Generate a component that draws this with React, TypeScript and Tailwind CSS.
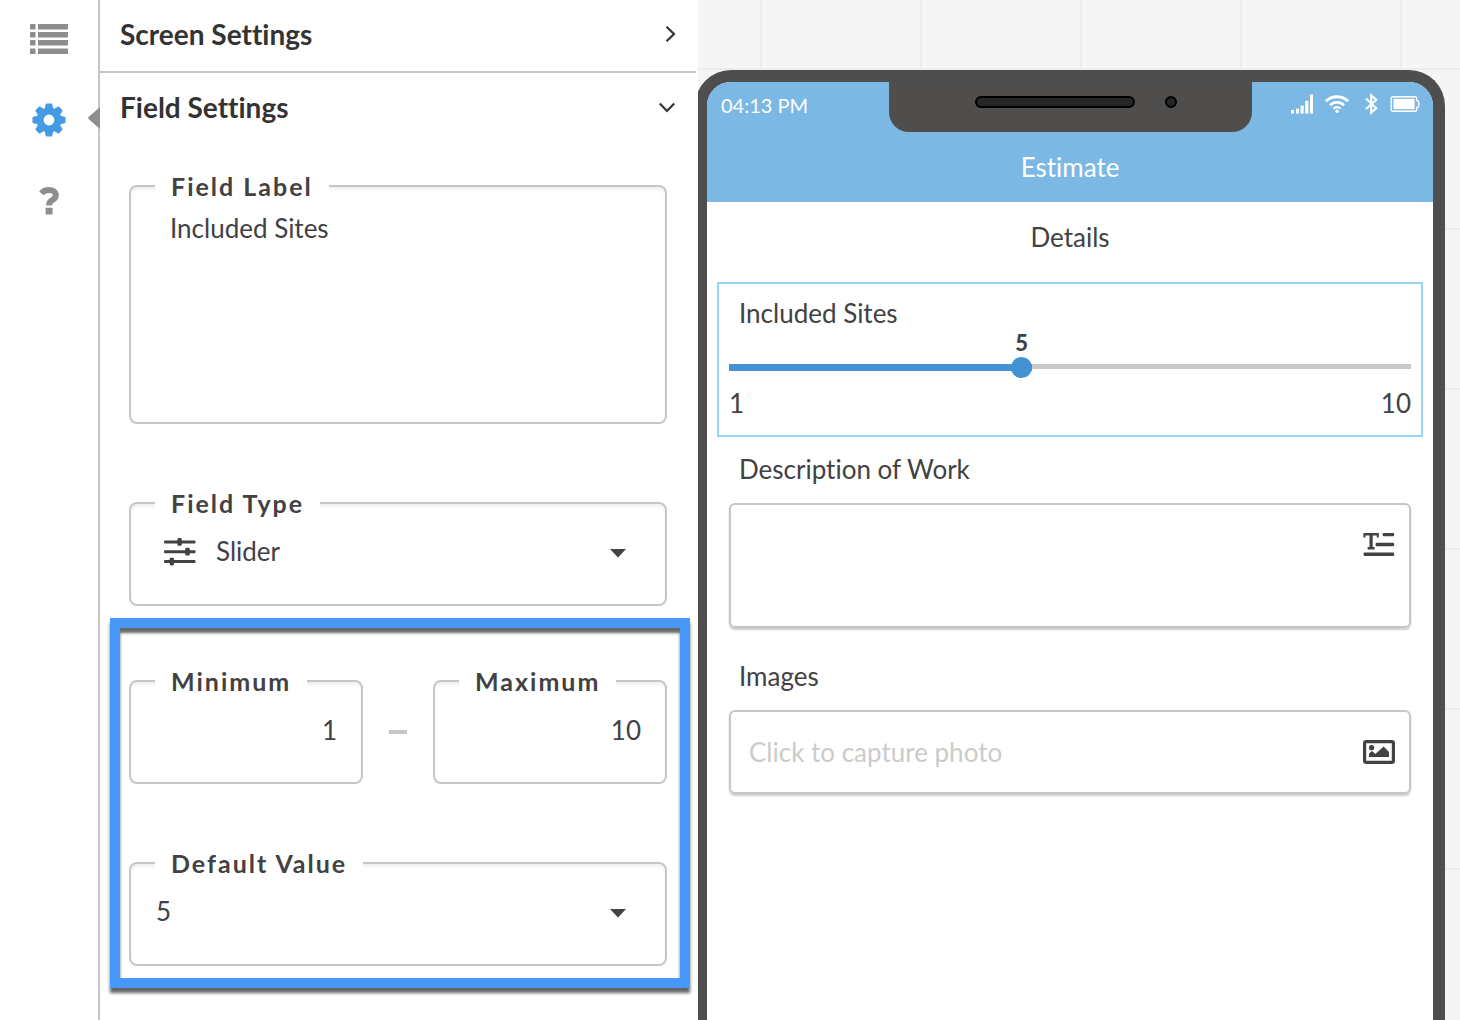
import { ReactNode, useState } from 'react'

interface OutlinedFieldProps {
  id: string
  label: string
  className?: string
  children: ReactNode
}

const FIELD_TYPES = ['Slider', 'Text', 'Number', 'Dropdown']
const SCALE = [1, 2, 3, 4, 5, 6, 7, 8, 9, 10]

function OutlinedField({ id, label, className = '', children }: OutlinedFieldProps) {
  return (
    <fieldset className={`min-w-0 rounded-lg border-2 border-[#c6c6c6] shadow-[inset_0_3px_3px_rgba(0,0,0,0.06)] ${className}`}>
      <legend className="ml-6 h-8 bg-white px-4 text-[25px] leading-8 font-bold tracking-[2px]">
        <label htmlFor={id}>{label}</label>
      </legend>
      {children}
    </fieldset>
  )
}

function CaretIcon() {
  return (
    <svg className="pointer-events-none absolute top-[30px] right-[39px] h-[9px] w-4" viewBox="0 0 16 9" fill="#424143" aria-hidden="true">
      <path d="M0 0h16L8 8.5z" />
    </svg>
  )
}

function ListIcon() {
  return (
    <svg width="38" height="30" viewBox="0 0 38 30" fill="#8f8d90" aria-hidden="true">
      {[0, 8, 16, 24.5].map((y) => (
        <g key={y}>
          <rect x="0" y={y} width="5.5" height="5.5" rx="0.6" />
          <rect x="8" y={y} width="30" height="5.5" rx="0.6" />
        </g>
      ))}
    </svg>
  )
}

function GearIcon() {
  return (
    <svg width="34" height="34" viewBox="-17 -17 34 34" aria-hidden="true">
      <g fill="#459be3">
        {[0, 45, 90, 135, 180, 225, 270, 315].map((a) => (
          <path key={a} transform={`rotate(${a})`} d="M-4.6 -10L-3.3 -15.6Q-3.1 -16.5 -2.2 -16.5H2.2Q3.1 -16.5 3.3 -15.6L4.6 -10z" />
        ))}
      </g>
      <circle r="8.9" fill="none" stroke="#459be3" strokeWidth="7" />
    </svg>
  )
}

function HelpIcon() {
  return (
    <svg width="20" height="28" viewBox="0 0 20 28" aria-hidden="true">
      <path d="M2.4 6.4C4.4 4 6.6 3 9.6 3C14 3 16.8 5 16.8 8.2C16.8 11.2 14.8 12.4 12.6 13.6C10.7 14.6 10.1 15.6 10.1 18.6" fill="none" stroke="#8f8d90" strokeWidth="6" />
      <rect x="6.6" y="20.8" width="7" height="6.6" rx="0.6" fill="#8f8d90" />
    </svg>
  )
}

function SlidersIcon() {
  return (
    <svg className="pointer-events-none absolute top-[19px] left-[33px]" width="32" height="28" viewBox="0 0 32 28" fill="#424143" aria-hidden="true">
      <rect x="0" y="2.4" width="31.5" height="3" rx="1" />
      <rect x="0" y="12.2" width="31.5" height="3" rx="1" />
      <rect x="0" y="22.1" width="31.5" height="3" rx="1" />
      <rect x="13.4" y="0" width="4.4" height="7.8" rx="1.4" />
      <rect x="21.2" y="9.8" width="4.6" height="7.8" rx="1.4" />
      <rect x="5.6" y="19.7" width="4.4" height="7.8" rx="1.4" />
    </svg>
  )
}

function RichTextIcon() {
  return (
    <svg width="32" height="24" viewBox="0 0 32 24" fill="#424143" aria-hidden="true">
      <path d="M0.4 0H15.8V4.4H13.8V2.6H9.7V14H11.6V16.6H4.6V14H6.5V2.6H2.4V4.4H0.4z" />
      <rect x="19.6" y="0" width="11.6" height="3.2" rx="1.2" />
      <rect x="12.6" y="9.8" width="18.6" height="3.4" rx="1.2" />
      <rect x="0.6" y="19.6" width="30.6" height="3.4" rx="1.2" />
    </svg>
  )
}

function ImageIcon() {
  return (
    <svg width="32" height="24" viewBox="0 0 32 24" fill="#424143" aria-hidden="true">
      <rect x="1.6" y="1.6" width="28.8" height="20.8" rx="1.6" fill="none" stroke="#424143" strokeWidth="3.2" />
      <circle cx="8.6" cy="7.7" r="2.6" />
      <path d="M6 17V13.4L9 11L12.4 14L20.6 6.6L26 12V17z" />
    </svg>
  )
}

function StatusIcons() {
  return (
    <div className="flex items-center gap-3">
      <svg width="22" height="20" viewBox="0 0 22 20" fill="#fff" aria-hidden="true">
        <rect x="0" y="16" width="3" height="3.6" />
        <rect x="5" y="14.6" width="3" height="5" />
        <rect x="9.5" y="11.6" width="3.2" height="8" />
        <rect x="14.2" y="6.8" width="3.2" height="12.8" />
        <rect x="19" y="0.4" width="3" height="19.2" />
      </svg>
      <svg width="24" height="18" viewBox="0 0 24 18" fill="none" stroke="#fff" strokeWidth="2.9" aria-hidden="true">
        <path d="M0.9 6.2C7 0.2 17 0.2 23.1 6.2" />
        <path d="M5 10.2C9 6.4 15 6.4 19 10.2" strokeWidth="2.7" />
        <path d="M8.4 13.7C10.6 11.8 13.4 11.8 15.6 13.7" strokeWidth="2.3" />
        <circle cx="12" cy="16.2" r="1.7" fill="#fff" stroke="none" />
      </svg>
      <svg className="ml-1" width="13" height="22" viewBox="0 0 13 22" fill="none" stroke="#fff" strokeWidth="2.1" aria-hidden="true">
        <path d="M1 5.6L11.2 15.2L6.2 19.6V2.4L11.2 6.8L1 16" />
      </svg>
      <svg width="30" height="16" viewBox="0 0 30 16" fill="none" stroke="#fff" strokeWidth="1.4" aria-hidden="true">
        <path d="M3 0.7H24.8Q26.8 0.7 26.8 2.5V4.6Q28.8 4.8 28.8 6.4V9.6Q28.8 11.2 26.8 11.4V13.5Q26.8 15.3 24.8 15.3H3Q1.2 15.3 1.2 13.5V2.5Q1.2 0.7 3 0.7z" />
        <rect x="3.4" y="2.8" width="21.2" height="10.4" rx="0.8" fill="#fff" stroke="none" />
      </svg>
    </div>
  )
}

export default function App() {
  const [fieldLabel, setFieldLabel] = useState('Included Sites')
  const [fieldType, setFieldType] = useState('Slider')
  const [minimum, setMinimum] = useState('1')
  const [maximum, setMaximum] = useState('10')
  const [value, setValue] = useState(5)

  const percent = ((value - Number(minimum)) / (Number(maximum) - Number(minimum))) * 100

  return (
    <div className="flex h-screen overflow-hidden bg-white font-['Lato',sans-serif] text-[26px] leading-8 text-[#424143] [font-variant-ligatures:none]">
      {/* Icon rail */}
      <nav className="relative flex w-[100px] shrink-0 flex-col items-center border-r-2 border-[#c6c6c6] pt-6">
        <button aria-label="Fields" className="h-[30px]">
          <ListIcon />
        </button>
        <button aria-label="Settings" className="mt-[49px] h-[34px]">
          <GearIcon />
        </button>
        <button aria-label="Help" className="mt-[50px] h-7">
          <HelpIcon />
        </button>
        <svg className="absolute top-[107px] -right-0.5" width="12" height="22" viewBox="0 0 12 22" fill="#8f8d90" aria-hidden="true">
          <path d="M12 0V22L0.5 12Q0 11 0.5 10z" />
        </svg>
      </nav>

      {/* Settings panel */}
      <section className="w-[598px] shrink-0">
        <button className="mr-0.5 flex h-[73px] w-[596px] items-center justify-between border-b-2 border-[#c6c6c6] pr-5 pb-1 pl-5 text-[28px] font-bold text-[#333]">
          Screen Settings
          <svg width="11" height="16" viewBox="0 0 11 16" fill="none" stroke="#333" strokeWidth="2.2" aria-hidden="true">
            <path d="M1.5 0.8L9 8L1.5 15.2" />
          </svg>
        </button>
        <button className="flex h-[68px] w-full items-center justify-between pr-[23px] pl-5 text-[28px] font-bold text-[#333]">
          Field Settings
          <svg width="16" height="11" viewBox="0 0 16 11" fill="none" stroke="#333" strokeWidth="2.2" aria-hidden="true">
            <path d="M0.8 1.5L8 9L15.2 1.5" />
          </svg>
        </button>

        <div className="mt-[29px] flex flex-col gap-[63px] pr-[31px] pl-[29px]">
          <OutlinedField id="field-label" label="Field Label">
            <textarea
              id="field-label"
              value={fieldLabel}
              onChange={(e) => setFieldLabel(e.target.value)}
              className="block h-[220px] w-full resize-none bg-transparent px-[39px] pt-[10px] outline-none"
            />
          </OutlinedField>
          <OutlinedField id="field-type" label="Field Type">
            <div className="relative pb-[21px]">
              <SlidersIcon />
              <select
                id="field-type"
                value={fieldType}
                onChange={(e) => setFieldType(e.target.value)}
                className="block h-16 w-full appearance-none bg-transparent pl-[85px] outline-none"
              >
                {FIELD_TYPES.map((type) => (
                  <option key={type}>{type}</option>
                ))}
              </select>
              <CaretIcon />
            </div>
          </OutlinedField>
        </div>

        {/* Highlighted range options */}
        <div className="mt-3 mr-2 ml-2.5 flex flex-col gap-[63px] border-10 border-[#4699f8] pt-[37px] pr-[13px] pb-3 pl-[9px] shadow-[0_5px_3px_rgba(0,0,0,0.6),inset_0_5px_3px_rgba(0,0,0,0.6)]">
          <div className="flex items-center gap-[26px]">
            <OutlinedField id="minimum" label="Minimum" className="flex-1">
              <input
                id="minimum"
                value={minimum}
                onChange={(e) => setMinimum(e.target.value)}
                className="mb-[19px] block h-[66px] w-full bg-transparent pr-6 text-right outline-none"
              />
            </OutlinedField>
            <span className="mt-[14px] h-1 w-[18px] bg-[#c6c6c6]" />
            <OutlinedField id="maximum" label="Maximum" className="flex-1">
              <input
                id="maximum"
                value={maximum}
                onChange={(e) => setMaximum(e.target.value)}
                className="mb-[19px] block h-[66px] w-full bg-transparent pr-6 text-right outline-none"
              />
            </OutlinedField>
          </div>
          <OutlinedField id="default-value" label="Default Value">
            <div className="relative pb-[21px]">
              <select
                id="default-value"
                value={value}
                onChange={(e) => setValue(Number(e.target.value))}
                className="block h-16 w-full appearance-none bg-transparent pl-[25px] outline-none"
              >
                {SCALE.map((n) => (
                  <option key={n}>{n}</option>
                ))}
              </select>
              <CaretIcon />
            </div>
          </OutlinedField>
        </div>
      </section>

      {/* Phone preview */}
      <main className="flex min-w-0 flex-1 overflow-hidden bg-[#f5f5f5] bg-[linear-gradient(to_right,#ededed_2px,transparent_2px),linear-gradient(to_bottom,#ededed_2px,transparent_2px)] bg-size-[160px_160px] bg-position-[62px_68px] pt-[70px] pr-[15px]">
        <div className="-ml-[3px] flex-1 rounded-t-[36px] border-12 border-b-0 border-[#4e4e4e] bg-[#4e4e4e]">
          <div className="h-full overflow-hidden rounded-t-[24px] bg-white">
            <header className="h-[120px] bg-[#7bb8e4] text-white">
              <div className="flex h-[50px] items-start justify-between">
                <time className="flex-1 pt-[7px] pl-[14px] text-[20px]">04:13 PM</time>
                <div className="flex h-[50px] w-[363px] items-center justify-center gap-[30px] rounded-b-[20px] bg-[#4f4e4c] pb-[10px] pl-[11px]">
                  <span className="h-3 w-40 rounded-full border-2 border-black bg-[#262425]" />
                  <span className="size-3 rounded-full border-2 border-black bg-[#262425]" />
                </div>
                <div className="flex flex-1 justify-end pt-[11px] pr-[13px]">
                  <StatusIcons />
                </div>
              </div>
              <h1 className="pt-[19px] text-center">Estimate</h1>
            </header>

            <h2 className="pt-[19px] text-center">Details</h2>

            <div className="mx-[10px] mt-[29px] border-2 border-[#99d4f6] px-[10px] pt-[13px] pb-4">
              <label htmlFor="sites" className="block pl-[10px]">{fieldLabel}</label>
              <div className="relative h-[50px]">
                <div className="flex justify-end" style={{ width: `${percent}%` }}>
                  <output htmlFor="sites" className="w-[21px] text-center text-[22px] leading-7 font-black">{value}</output>
                </div>
                <div className="flex h-[21px] items-center bg-[linear-gradient(#c9c9c9,#c9c9c9)] bg-size-[100%_5px] bg-position-[0_7px] bg-no-repeat">
                  <div
                    className="flex h-[7px] items-center justify-end bg-[#4392d4]"
                    style={{ width: `${percent}%` }}
                  >
                    <span className="size-[21px] rounded-full bg-[#4392d4]" />
                  </div>
                </div>
                <input
                  id="sites"
                  type="range"
                  min={minimum}
                  max={maximum}
                  value={value}
                  onChange={(e) => setValue(Number(e.target.value))}
                  className="absolute inset-x-0 bottom-0 h-[21px] w-full cursor-pointer opacity-0"
                />
              </div>
              <div className="mt-2 flex justify-between">
                <span>{minimum}</span>
                <span>{maximum}</span>
              </div>
            </div>

            <div className="px-[22px] pt-4">
              <label htmlFor="description" className="block pl-[10px]">Description of Work</label>
              <div className="mt-[18px] flex h-[125px] rounded-md border-2 border-[#c6c6c6] shadow-[0_2px_2px_rgba(0,0,0,0.2)]">
                <textarea id="description" className="flex-1 resize-none bg-transparent px-[18px] py-6 outline-none" />
                <button aria-label="Expand text" className="mt-7 mr-[14px] h-6">
                  <RichTextIcon />
                </button>
              </div>

              <label htmlFor="images" className="mt-8 block pl-[10px]">Images</label>
              <div className="mt-[18px] flex h-[84px] items-center rounded-md border-2 border-[#c6c6c6] shadow-[0_2px_2px_rgba(0,0,0,0.2)]">
                <input
                  id="images"
                  readOnly
                  placeholder="Click to capture photo"
                  className="min-w-0 flex-1 bg-transparent px-[18px] outline-none placeholder:text-[#cbcbcb]"
                />
                <button aria-label="Capture photo" className="mr-[14px] h-6">
                  <ImageIcon />
                </button>
              </div>
            </div>
          </div>
        </div>
      </main>
    </div>
  )
}
